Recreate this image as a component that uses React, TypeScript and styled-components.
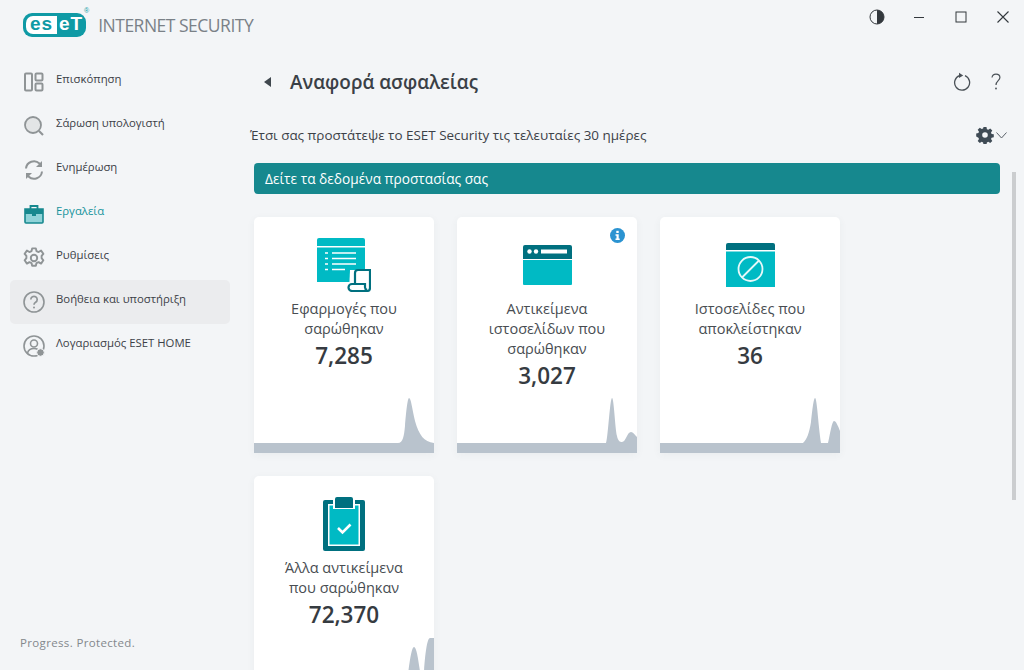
import React from 'react'
import styled, { createGlobalStyle } from 'styled-components'

const TEAL = '#00bac4'
const DARK_TEAL = '#00707f'
const ICON_GRAY = '#8f9496'

const GlobalStyle = createGlobalStyle`
  html, body {
    margin: 0;
    padding: 0;
    background: #f3f5f7;
    overflow: hidden;
  }
`

const Shell = styled.div`
  position: relative;
  display: grid;
  grid-template-columns: 240px 1fr;
  width: 1024px;
  height: 670px;
  overflow: hidden;
  font-family: 'Open Sans', 'Noto Sans', sans-serif;
  color: #3c4147;
`

const Sidebar = styled.aside`
  display: flex;
  flex-direction: column;
  height: 670px;
`

const Brand = styled.div`
  display: flex;
  align-items: center;
  gap: 12px;
  height: 60px;
  padding: 0 0 10px 23px;
  box-sizing: border-box;
`

const Logo = styled.div`
  position: relative;
  display: flex;
  align-items: center;
  width: 65px;
  height: 24px;
  padding: 3px;
  box-sizing: border-box;
  border-radius: 9px;
  background: #0f9aa5;
  font-family: 'Liberation Sans', sans-serif;
  font-weight: 700;
  font-size: 19px;
  line-height: 18px;
`

const LogoLight = styled.span`
  display: flex;
  align-items: center;
  justify-content: center;
  width: 31px;
  height: 18px;
  padding-bottom: 2px;
  box-sizing: border-box;
  border-radius: 7px 0 0 7px;
  background: #fff;
  color: #0f9aa5;
  letter-spacing: 1px;
`

const LogoDark = styled.span`
  margin-left: 2px;
  padding-bottom: 2px;
  color: #fff;
  letter-spacing: 1px;
`

const Registered = styled.span`
  position: absolute;
  top: -6px;
  right: -3px;
  font-size: 7px;
  line-height: 7px;
  font-weight: 400;
  color: #0f9aa5;
`

const Product = styled.div`
  font-family: 'Open Sans', sans-serif;
  font-size: 17.5px;
  letter-spacing: -0.5px;
  color: #7a8187;
  white-space: nowrap;
`

const Nav = styled.nav`
  display: flex;
  flex-direction: column;
  padding: 0 10px;
`

const NavItem = styled.div<{ $active?: boolean; $hover?: boolean }>`
  display: flex;
  align-items: center;
  gap: 12px;
  height: 44px;
  padding-left: 14px;
  border-radius: 5px;
  background: ${(p) => (p.$hover ? '#ebecee' : 'transparent')};
  color: ${(p) => (p.$active ? '#14939c' : '#3c4147')};
  font-size: 11.35px;
  font-weight: ${(p) => (p.$active ? 500 : 400)};
`

const NavIconSlot = styled.span`
  display: flex;
  align-items: center;
  justify-content: center;
  width: 20px;
  height: 22px;
`

const NavLabel = styled.span`
  padding-bottom: 8px;
`

const Tagline = styled.div`
  margin-top: auto;
  padding: 0 0 20px 20px;
  font-size: 11.5px;
  letter-spacing: 0.35px;
  color: #83888c;
`

const Main = styled.main`
  display: flex;
  flex-direction: column;
  height: 670px;
  overflow: hidden;
`

const WindowBar = styled.div`
  display: flex;
  flex: none;
  align-items: center;
  justify-content: flex-end;
  height: 34px;
  gap: 20px;
  padding-right: 10px;
`

const WindowButton = styled.button`
  display: flex;
  align-items: center;
  justify-content: center;
  width: 22px;
  height: 22px;
  padding: 0;
  border: 0;
  background: none;
`

const TitleRow = styled.div`
  display: flex;
  flex: none;
  align-items: center;
  height: 44px;
  margin-top: 26px;
  padding: 0 22px 0 23px;
  box-sizing: border-box;
`

const Title = styled.h1`
  margin: 0 0 0 18px;
  font-size: 18.9px;
  font-weight: 600;
  color: #3a4046;
`

const TitleActions = styled.div`
  display: flex;
  align-items: center;
  gap: 19px;
  margin-left: auto;
`

const SubRow = styled.div`
  display: flex;
  flex: none;
  align-items: center;
  height: 24px;
  margin-top: 19px;
  padding: 0 17px 0 10px;
`

const SubText = styled.div`
  font-size: 13.45px;
  color: #3c4147;
`

const Gear = styled.div`
  display: flex;
  align-items: center;
  gap: 2px;
  margin-left: auto;
`

const Banner = styled.div`
  display: flex;
  flex: none;
  align-items: center;
  width: 746px;
  height: 31px;
  margin: 16px 0 0 14px;
  padding-left: 11px;
  box-sizing: border-box;
  border-radius: 4px;
  background: #16888e;
  color: #fff;
  font-size: 13.7px;
`

const Cards = styled.div`
  display: grid;
  flex: none;
  grid-template-columns: repeat(3, 180px);
  gap: 23px;
  margin: 23px 0 0 14px;
`

const Card = styled.section`
  position: relative;
  display: flex;
  flex-direction: column;
  align-items: center;
  height: 236px;
  border-radius: 5px 5px 0 0;
  background: #fff;
  box-shadow: 0 2px 8px rgba(60, 70, 80, 0.05);
  text-align: center;
`

const IconBox = styled.div`
  display: flex;
  align-items: center;
  justify-content: center;
  height: 68px;
  margin-top: 14px;
`

const CardLabel = styled.div`
  width: 146px;
  font-size: 14.5px;
  line-height: 20px;
  color: #484d52;
`

const CardValue = styled.div`
  font-size: 22.5px;
  line-height: 34px;
  font-weight: 600;
  color: #363b41;
`

const InfoBadge = styled.svg`
  position: absolute;
  top: 11px;
  right: 12px;
`

const Chart = styled.svg`
  display: block;
  margin-top: auto;
  flex-shrink: 0;
`

const Scrollbar = styled.div`
  position: absolute;
  top: 172px;
  left: 1012px;
  width: 4px;
  height: 328px;
  background: #cbcdcf;
`

const AppsIcon = () => (
  <svg width="54" height="54" viewBox="0 0 54 54">
    <path d="M0 2a2 2 0 0 1 2-2h44a2 2 0 0 1 2 2v6H0z" fill={TEAL} />
    <path d="M0 9.500h48V44H0z" fill={TEAL} />
    <path d="M8 15h3M8 20.500h3M8 26h3M8 31.500h3M15 15h24M15 20.500h24M15 26h24M15 31.500h13" stroke="#fff" strokeWidth="1.500" />
    <path d="M33 32h21v22H32z" fill="#fff" />
    <path d="M38 45V35a3 3 0 0 1 3-3h12v18a3 3 0 0 1-3 3H35a3.500 3.500 0 0 1 0-7h13v3a3 3 0 0 0 2 3" fill="none" stroke={DARK_TEAL} strokeWidth="2.200" />
  </svg>
)

const WebIcon = () => (
  <svg width="49" height="40" viewBox="0 0 49 40">
    <path d="M0 2a2 2 0 0 1 2-2h45a2 2 0 0 1 2 2v12H0z" fill={DARK_TEAL} />
    <path d="M0 15h49v24a1 1 0 0 1-1 1H1a1 1 0 0 1-1-1z" fill={TEAL} />
    <circle cx="6.500" cy="6.500" r="2.200" fill="#fff" />
    <circle cx="13" cy="6.500" r="2.200" fill="#fff" />
    <rect x="18" y="4.500" width="26" height="4" fill="#fff" />
  </svg>
)

const BlockedIcon = () => (
  <svg width="49" height="44" viewBox="0 0 49 44">
    <path d="M0 2a2 2 0 0 1 2-2h45a2 2 0 0 1 2 2v5H0z" fill={DARK_TEAL} />
    <path d="M0 8.500h49V44H0z" fill={TEAL} />
    <circle cx="24.500" cy="26" r="12" fill="none" stroke="#e6f8f9" strokeWidth="1.800" />
    <path d="M16 34.500L33 17.500" stroke="#e6f8f9" strokeWidth="1.800" />
  </svg>
)

const ClipboardIcon = () => (
  <svg width="42" height="54" viewBox="0 0 42 54">
    <path d="M2 3h38a2 2 0 0 1 2 2v47a2 2 0 0 1-2 2H2a2 2 0 0 1-2-2V5a2 2 0 0 1 2-2z" fill={DARK_TEAL} />
    <path d="M5 7h32v42H5z" fill="#fff" />
    <path d="M6.500 8.500h29v39h-29z" fill={TEAL} />
    <path d="M10 0h22v12H10z" fill="#fff" />
    <path d="M12 2a2 2 0 0 1 2-2h14a2 2 0 0 1 2 2v9H12z" fill={DARK_TEAL} />
    <path d="M15 31l4.500 4.500 8-8" fill="none" stroke="#fff" strokeWidth="2.600" />
  </svg>
)

const DashIcon = () => (
  <svg width="20" height="20" viewBox="0 0 20 20" fill="none" stroke={ICON_GRAY} strokeWidth="2">
    <rect x="1" y="1.500" width="7" height="17" rx="1" />
    <rect x="11.500" y="1.500" width="7" height="7" rx="1" />
    <rect x="11.500" y="11.500" width="7" height="7" rx="1" />
  </svg>
)

const SearchIcon = () => (
  <svg width="20" height="20" viewBox="0 0 20 20" fill="none" stroke={ICON_GRAY}>
    <circle cx="9" cy="9" r="8" fill="#e3e5e6" strokeWidth="1.800" />
    <path d="M15 15l4 4" strokeWidth="2.200" />
  </svg>
)

const UpdateIcon = () => (
  <svg width="20" height="20" viewBox="0 0 20 20" fill="none" stroke={ICON_GRAY} strokeWidth="2">
    <path d="M2 8.500A8 8 0 0 1 15.500 3.500L17 5" />
    <path d="M18 11.500A8 8 0 0 1 4.500 16.500L3 15" />
    <path d="M18 1v6h-6z" fill={ICON_GRAY} stroke="none" />
    <path d="M2 19v-6h6z" fill={ICON_GRAY} stroke="none" />
  </svg>
)

const ToolsIcon = () => (
  <svg width="20" height="20" viewBox="0 0 20 20">
    <path d="M1 5h18v13a1 1 0 0 1-1 1H2a1 1 0 0 1-1-1z" fill="#8fd3d8" stroke="#16888e" strokeWidth="1.600" />
    <path d="M1 5h18v5H1z" fill="#16888e" />
    <path d="M6.500 5V2h7v3" fill="none" stroke="#16888e" strokeWidth="1.800" />
    <rect x="8" y="9" width="4" height="3" fill="#16888e" />
  </svg>
)

const SettingsIcon = () => (
  <svg width="22" height="22" viewBox="0 0 24 24" fill="none" stroke={ICON_GRAY} strokeWidth="2.100" style={{ flexShrink: 0 }}>
    <circle cx="12" cy="12" r="3.500" />
    <path d="M10 1.500h4l.7 3 2.300 1 2.700-1.600 2.500 3.600-1.900 2.300v2.400l1.900 2.300-2.500 3.600-2.700-1.600-2.300 1-.7 3h-4l-.7-3-2.300-1-2.700 1.600-2.500-3.600 1.900-2.300V9.800L1.800 7.500l2.500-3.600L7 5.500l2.300-1z" strokeLinejoin="round" />
  </svg>
)

const HelpIcon = () => (
  <svg width="22" height="22" viewBox="0 0 22 22" fill="none" stroke={ICON_GRAY} strokeWidth="1.600" style={{ flexShrink: 0 }}>
    <circle cx="11" cy="11" r="10" />
    <path d="M7.800 8.500a3.200 3.200 0 1 1 4.800 2.800c-1 .6-1.600 1.200-1.600 2.500" strokeWidth="1.700" />
    <circle cx="11" cy="16.500" r="1" fill={ICON_GRAY} stroke="none" />
  </svg>
)

const AccountIcon = () => (
  <svg width="22" height="22" viewBox="0 0 22 22" fill="none" stroke={ICON_GRAY} strokeWidth="1.600" style={{ flexShrink: 0 }}>
    <circle cx="11" cy="11" r="10" />
    <circle cx="11" cy="8.500" r="3.500" />
    <path d="M4.500 18c.8-3 3-4.500 6.500-4.500 1.500 0 2.700.3 3.600.8" />
    <circle cx="17.500" cy="17.500" r="3.800" fill={ICON_GRAY} stroke="#f3f5f7" strokeWidth="1" />
  </svg>
)

const navItems = [
  { label: 'Επισκόπηση', icon: <DashIcon /> },
  { label: 'Σάρωση υπολογιστή', icon: <SearchIcon /> },
  { label: 'Ενημέρωση', icon: <UpdateIcon /> },
  { label: 'Εργαλεία', icon: <ToolsIcon />, active: true },
  { label: 'Ρυθμίσεις', icon: <SettingsIcon /> },
  { label: 'Βοήθεια και υποστήριξη', icon: <HelpIcon />, hover: true },
  { label: 'Λογαριασμός ESET HOME', icon: <AccountIcon /> },
]

const cards = [
  {
    label: 'Εφαρμογές που σαρώθηκαν',
    value: '7,285',
    icon: <AppsIcon />,
    chartHeight: 55,
    chart: 'M0 45H144C149 45 150 38 151 28C152 15 153.500 0 155 0C157 0 158 10 161 23C165 37 170 44 180 45V55H0Z',
  },
  {
    label: 'Αντικείμενα ιστοσελίδων που σαρώθηκαν',
    value: '3,027',
    icon: <WebIcon />,
    info: true,
    chartHeight: 55,
    chart: 'M0 45H149C151 38 153 0 155 0C157 0 158 30 160 38C161 43 163 44 165 44C169 44 170 34 174 34C176 34 178 37 180 39V55H0Z',
  },
  {
    label: 'Ιστοσελίδες που αποκλείστηκαν',
    value: '36',
    icon: <BlockedIcon />,
    chartHeight: 55,
    chart: 'M0 45H143C147 41 149 36 151 24C152 15 153.500 0 155 0C157 0 158 25 161 45H168C170 36 172 23 174 23C176 23 178 28 180 33V55H0Z',
  },
  {
    label: 'Άλλα αντικείμενα που σαρώθηκαν',
    value: '72,370',
    icon: <ClipboardIcon />,
    chartHeight: 74,
    chart: 'M0 64H150C153 50 156 9 160 9C164 9 166 40 169 50C170 30 172 0 176 0H180V74H0Z',
  },
]

export default function App() {
  return (
    <Shell>
      <GlobalStyle />
      <Sidebar>
        <Brand>
          <Logo>
            <LogoLight>es</LogoLight>
            <LogoDark>eT</LogoDark>
            <Registered>®</Registered>
          </Logo>
          <Product>INTERNET SECURITY</Product>
        </Brand>
        <Nav>
          {navItems.map((item) => (
            <NavItem key={item.label} $active={item.active} $hover={item.hover}>
              <NavIconSlot>{item.icon}</NavIconSlot>
              <NavLabel>{item.label}</NavLabel>
            </NavItem>
          ))}
        </Nav>
        <Tagline>Progress. Protected.</Tagline>
      </Sidebar>

      <Main>
        <WindowBar>
          <WindowButton>
            <svg width="16" height="16" viewBox="0 0 16 16">
              <circle cx="8" cy="8" r="7" fill="none" stroke="#33383d" strokeWidth="1" />
              <path d="M8 1a7 7 0 0 1 0 14z" fill="#33383d" />
            </svg>
          </WindowButton>
          <WindowButton>
            <svg width="12" height="12" viewBox="0 0 12 12">
              <path d="M1 6.500h10" stroke="#33383d" strokeWidth="1" />
            </svg>
          </WindowButton>
          <WindowButton>
            <svg width="12" height="12" viewBox="0 0 12 12">
              <rect x="1" y="1" width="10" height="10" fill="none" stroke="#33383d" strokeWidth="1" />
            </svg>
          </WindowButton>
          <WindowButton>
            <svg width="14" height="14" viewBox="0 0 14 14">
              <path d="M1.500 1.500l11 11M12.500 1.500l-11 11" stroke="#33383d" strokeWidth="1.100" />
            </svg>
          </WindowButton>
        </WindowBar>

        <TitleRow>
          <svg width="9" height="12" viewBox="0 0 9 12">
            <path d="M8 1v10L1 6z" fill="#3f474e" />
          </svg>
          <Title>Αναφορά ασφαλείας</Title>
          <TitleActions>
            <svg width="18" height="20" viewBox="0 0 18 20" fill="none" stroke="#4a5157" strokeWidth="1.300">
              <path d="M6.500 3.600A7.500 7.500 0 1 0 12 3.700" />
              <path d="M6 .8l4.200 2.700L6 6z" fill="#4a5157" stroke="none" />
            </svg>
            <svg width="12" height="18" viewBox="0 0 12 18" fill="none" stroke="#4a5157" strokeWidth="1.200">
              <path d="M2 4.500C2.300 2.500 4 1.200 6 1.200c2.200 0 3.900 1.400 3.900 3.400 0 3-3.900 3.300-3.900 7.400" />
              <circle cx="6" cy="15.500" r="0.900" fill="#4a5157" stroke="none" />
            </svg>
          </TitleActions>
        </TitleRow>

        <SubRow>
          <SubText>Έτσι σας προστάτεψε το ESET Security τις τελευταίες 30 ημέρες</SubText>
          <Gear>
            <svg width="18" height="18" viewBox="0 0 18 18">
              <path fillRule="evenodd" fill="#3f4b55" d="M7.500 1h3l.4 2.200 1.400.6 1.900-1.300 2.100 2.100-1.300 1.900.6 1.400 2.200.4v3l-2.200.4-.6 1.400 1.300 1.900-2.100 2.100-1.900-1.300-1.400.6-.4 2.200h-3l-.4-2.200-1.400-.6-1.900 1.300-2.100-2.100 1.300-1.900-.6-1.400L.2 10.500v-3l2.200-.4.6-1.400L1.700 3.800l2.100-2.100 1.900 1.300 1.400-.6zM9 6.200a2.800 2.800 0 1 0 0 5.600 2.800 2.800 0 0 0 0-5.600z" />
            </svg>
            <svg width="11" height="7" viewBox="0 0 11 7">
              <path d="M.5.500L5.500 6 10.500.5" fill="none" stroke="#5a6269" strokeWidth="1" />
            </svg>
          </Gear>
        </SubRow>

        <Banner>Δείτε τα δεδομένα προστασίας σας</Banner>

        <Cards>
          {cards.map((card) => (
            <Card key={card.label}>
              {card.info && (
                <InfoBadge width="15" height="15" viewBox="0 0 15 15">
                  <circle cx="7.500" cy="7.500" r="7.500" fill="#2b93d1" />
                  <rect x="6.300" y="2.800" width="2.400" height="2.200" fill="#fff" />
                  <path d="M5.500 6.300h3.200v4.300h1v1.400H5.500v-1.400h1V7.700h-1z" fill="#fff" />
                </InfoBadge>
              )}
              <IconBox>{card.icon}</IconBox>
              <CardLabel>{card.label}</CardLabel>
              <CardValue>{card.value}</CardValue>
              <Chart width="180" height={card.chartHeight} viewBox={`0 0 180 ${card.chartHeight}`}>
                <path d={card.chart} fill="#b9c3cd" />
              </Chart>
            </Card>
          ))}
        </Cards>
      </Main>

      <Scrollbar />
    </Shell>
  )
}
